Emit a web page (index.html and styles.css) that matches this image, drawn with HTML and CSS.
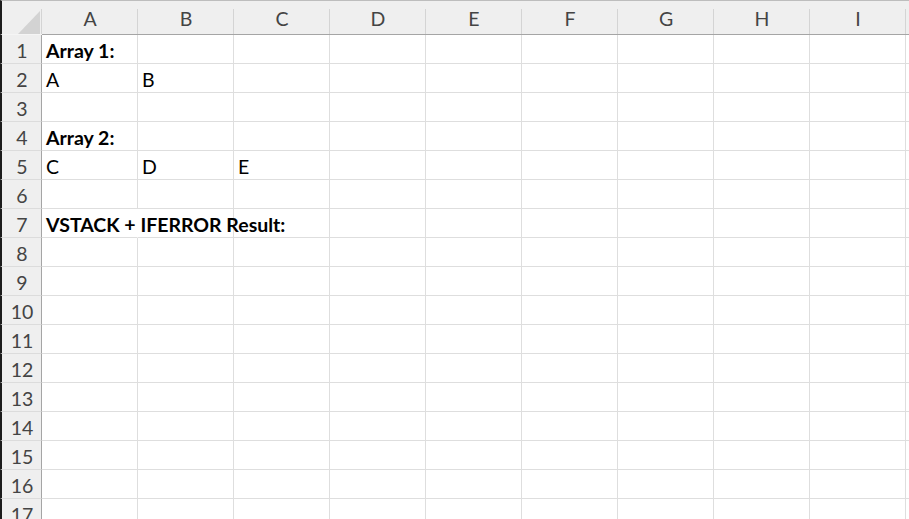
FILE: index.html
```html
<!DOCTYPE html>
<html>
<head>
<meta charset="utf-8">
<link rel="stylesheet" href="styles.css">
</head>
<body>
<div class="sheet">
  <div class="corner"><span class="tri"></span></div>
  <div class="ch">A</div><div class="ch">B</div><div class="ch">C</div><div class="ch">D</div><div class="ch">E</div><div class="ch">F</div><div class="ch">G</div><div class="ch">H</div><div class="ch">I</div><div class="ch last"></div>

  <div class="rh">1</div><div class="c b">Array 1:</div><div class="c"></div><div class="c"></div><div class="c"></div><div class="c"></div><div class="c"></div><div class="c"></div><div class="c"></div><div class="c"></div><div class="c last"></div>
  <div class="rh">2</div><div class="c">A</div><div class="c">B</div><div class="c"></div><div class="c"></div><div class="c"></div><div class="c"></div><div class="c"></div><div class="c"></div><div class="c"></div><div class="c last"></div>
  <div class="rh">3</div><div class="c"></div><div class="c"></div><div class="c"></div><div class="c"></div><div class="c"></div><div class="c"></div><div class="c"></div><div class="c"></div><div class="c"></div><div class="c last"></div>
  <div class="rh">4</div><div class="c b">Array 2:</div><div class="c"></div><div class="c"></div><div class="c"></div><div class="c"></div><div class="c"></div><div class="c"></div><div class="c"></div><div class="c"></div><div class="c last"></div>
  <div class="rh">5</div><div class="c">C</div><div class="c">D</div><div class="c">E</div><div class="c"></div><div class="c"></div><div class="c"></div><div class="c"></div><div class="c"></div><div class="c"></div><div class="c last"></div>
  <div class="rh">6</div><div class="c"></div><div class="c"></div><div class="c"></div><div class="c"></div><div class="c"></div><div class="c"></div><div class="c"></div><div class="c"></div><div class="c"></div><div class="c last"></div>
  <div class="rh">7</div><div class="c b over">VSTACK + IFERROR Result:</div><div class="c nl"></div><div class="c"></div><div class="c"></div><div class="c"></div><div class="c"></div><div class="c"></div><div class="c"></div><div class="c"></div><div class="c last"></div>
  <div class="rh">8</div><div class="c"></div><div class="c"></div><div class="c"></div><div class="c"></div><div class="c"></div><div class="c"></div><div class="c"></div><div class="c"></div><div class="c"></div><div class="c last"></div>
  <div class="rh">9</div><div class="c"></div><div class="c"></div><div class="c"></div><div class="c"></div><div class="c"></div><div class="c"></div><div class="c"></div><div class="c"></div><div class="c"></div><div class="c last"></div>
  <div class="rh">10</div><div class="c"></div><div class="c"></div><div class="c"></div><div class="c"></div><div class="c"></div><div class="c"></div><div class="c"></div><div class="c"></div><div class="c"></div><div class="c last"></div>
  <div class="rh">11</div><div class="c"></div><div class="c"></div><div class="c"></div><div class="c"></div><div class="c"></div><div class="c"></div><div class="c"></div><div class="c"></div><div class="c"></div><div class="c last"></div>
  <div class="rh">12</div><div class="c"></div><div class="c"></div><div class="c"></div><div class="c"></div><div class="c"></div><div class="c"></div><div class="c"></div><div class="c"></div><div class="c"></div><div class="c last"></div>
  <div class="rh">13</div><div class="c"></div><div class="c"></div><div class="c"></div><div class="c"></div><div class="c"></div><div class="c"></div><div class="c"></div><div class="c"></div><div class="c"></div><div class="c last"></div>
  <div class="rh">14</div><div class="c"></div><div class="c"></div><div class="c"></div><div class="c"></div><div class="c"></div><div class="c"></div><div class="c"></div><div class="c"></div><div class="c"></div><div class="c last"></div>
  <div class="rh">15</div><div class="c"></div><div class="c"></div><div class="c"></div><div class="c"></div><div class="c"></div><div class="c"></div><div class="c"></div><div class="c"></div><div class="c"></div><div class="c last"></div>
  <div class="rh">16</div><div class="c"></div><div class="c"></div><div class="c"></div><div class="c"></div><div class="c"></div><div class="c"></div><div class="c"></div><div class="c"></div><div class="c"></div><div class="c last"></div>
  <div class="rh">17</div><div class="c"></div><div class="c"></div><div class="c"></div><div class="c"></div><div class="c"></div><div class="c"></div><div class="c"></div><div class="c"></div><div class="c"></div><div class="c last"></div>
</div>
</body>
</html>
```

FILE: styles.css
```css
html, body {
  margin: 0;
  padding: 0;
  background: #ffffff;
  overflow: hidden;
  height: 519px;
}
.sheet {
  display: grid;
  grid-template-columns: 42px repeat(9, 96px) 1fr;
  grid-template-rows: 35px repeat(17, 29px);
  width: 909px;
  font-family: Lato, "Open Sans", sans-serif;
  font-size: 19.5px;
  color: #000;
}
.corner, .ch {
  background: #efefef;
  border-top: 1px solid #bdbdbd;
  border-bottom: 1px solid #a5a5a5;
  box-sizing: border-box;
  position: relative;
}
.corner {
  border-left: 2px solid #1c1c1c;
  border-bottom-color: #f5f5f5;
}
.corner::after, .ch::after {
  content: "";
  position: absolute;
  right: 0;
  top: 8px;
  bottom: 0;
  width: 1px;
  background: #d4d4d4;
}
.tri {
  position: absolute;
  left: 16px;
  top: 10px;
  width: 22px;
  height: 23px;
  background: #d3d3d3;
  clip-path: polygon(100% 0, 100% 100%, 0 100%);
}
.ch {
  display: flex;
  align-items: center;
  justify-content: center;
  color: #444444;
  padding-top: 2px;
}
.ch.last::after { display: none; }
.rh {
  background: #efefef;
  border-left: 2px solid #1c1c1c;
  border-right: 1px solid #a5a5a5;
  border-bottom: 1px solid #dcdcdc;
  box-sizing: border-box;
  display: flex;
  align-items: center;
  justify-content: center;
  color: #444444;
  padding-top: 2px;
  padding-left: 1px;
}
.c {
  border-right: 1px solid #dedede;
  border-bottom: 1px solid #dedede;
  box-sizing: border-box;
  padding: 2px 0 0 4px;
  display: flex;
  align-items: center;
  white-space: nowrap;
}
.c.last { border-right: none; }
.b { font-weight: 700; }
.over {
  overflow: visible;
  border-right-color: transparent;
  position: relative;
  z-index: 1;
}
```
